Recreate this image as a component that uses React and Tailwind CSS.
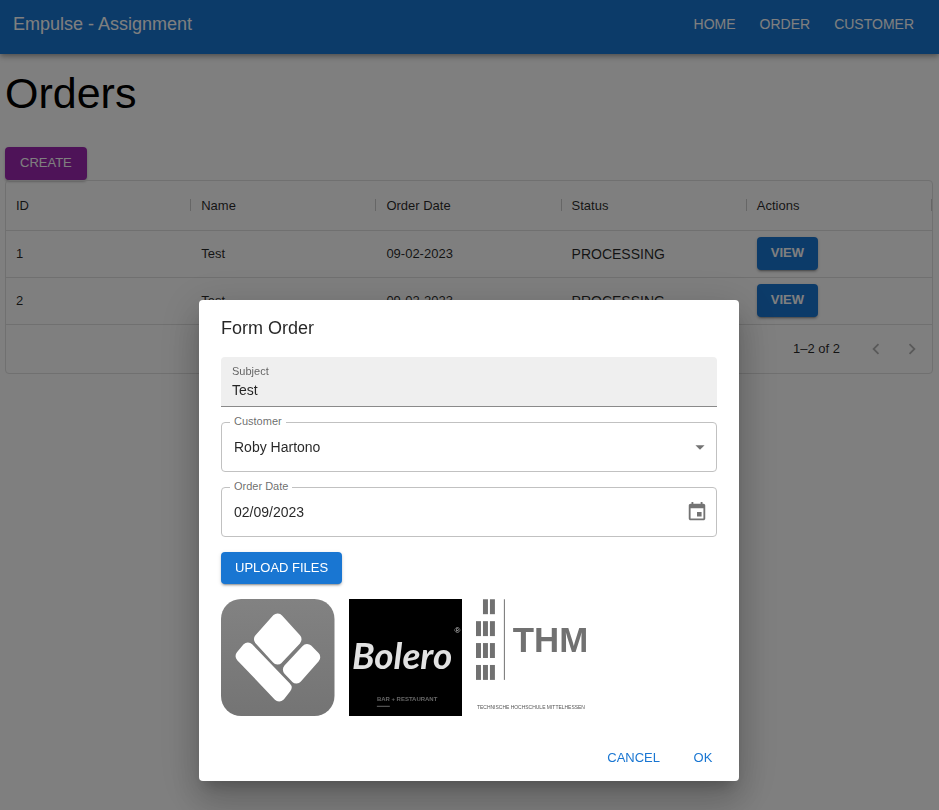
const orders = [
  { id: 1, name: "Test", date: "09-02-2023", status: "PROCESSING" },
  { id: 2, name: "Test", date: "09-02-2023", status: "PROCESSING" },
];

const columns = ["ID", "Name", "Order Date", "Status", "Actions"];

const raised =
  "rounded-[4px] text-[13px] leading-5 text-white shadow-[0_3px_1px_-2px_rgba(0,0,0,0.2),0_2px_2px_0_rgba(0,0,0,0.14),0_1px_4px_0_rgba(0,0,0,0.12)]";

function Icon({ d, className }) {
  return (
    <svg viewBox="0 0 24 24" className={className} fill="currentColor" aria-hidden="true">
      <path d={d} />
    </svg>
  );
}

function AppBar() {
  return (
    <header className="flex h-[54px] items-center justify-between bg-[#1976d2] pr-[25px] pb-[6px] pl-[13px] text-white shadow-[0_2px_4px_-1px_rgba(0,0,0,0.2),0_4px_5px_0_rgba(0,0,0,0.14),0_1px_9px_0_rgba(0,0,0,0.12)]">
      <div className="text-[18px] leading-6">Empulse - Assignment</div>
      <nav className="flex gap-6 text-sm">
        <a href="#home">HOME</a>
        <a href="#order">ORDER</a>
        <a href="#customer">CUSTOMER</a>
      </nav>
    </header>
  );
}

function OrdersTable() {
  return (
    <div className="overflow-hidden rounded-[4px] border border-[#e0e0e0] text-[13px] text-black/85">
      <table className="w-full table-fixed border-collapse">
        <thead>
          <tr className="h-[49px] border-b border-[#e0e0e0]">
            {columns.map((c) => (
              <th key={c} className="p-0 pl-[10px] text-left font-normal">
                <div className="flex items-center justify-between">
                  {c}
                  <span className="h-3 w-px bg-[#cccccc]" />
                </div>
              </th>
            ))}
          </tr>
        </thead>
        <tbody>
          {orders.map((o) => (
            <tr key={o.id} className="h-[47px] border-b border-[#e0e0e0]">
              <td className="p-0 pl-[10px]">{o.id}</td>
              <td className="p-0 pl-[10px]">{o.name}</td>
              <td className="p-0 pl-[10px]">{o.date}</td>
              <td className="p-0 pl-[10px] text-sm">{o.status}</td>
              <td className="p-0 pl-[10px]">
                <button type="button" className={`${raised} block h-[33px] bg-[#1976d2] px-[14px] pb-px font-bold`}>
                  VIEW
                </button>
              </td>
            </tr>
          ))}
        </tbody>
      </table>
      <div className="flex h-[48px] items-center justify-end pr-[9px]">
        <span className="mr-[25px]">1–2 of 2</span>
        <div className="flex gap-[14px] text-black/30">
          <button type="button" disabled aria-label="Previous page">
            <Icon className="size-[22px]" d="M15.41 16.59 10.83 12l4.58-4.59L14 6l-6 6 6 6z" />
          </button>
          <button type="button" disabled aria-label="Next page">
            <Icon className="size-[22px]" d="M8.59 16.59 13.17 12 8.59 7.41 10 6l6 6-6 6z" />
          </button>
        </div>
      </div>
    </div>
  );
}

function OutlinedField({ id, label, children }) {
  return (
    <div className="relative flex h-[50px] items-center rounded-[4px] border border-[#c1c1c1]">
      <label htmlFor={id} className="absolute -top-2 left-2 bg-white px-1 text-[11px] leading-3 text-black/60">
        {label}
      </label>
      {children}
    </div>
  );
}

function TilesLogo() {
  return (
    <svg viewBox="0 0 113 117" preserveAspectRatio="none" className="h-[117px] w-full" role="img" aria-label="Uploaded logo">
      <defs>
        <linearGradient id="tile" x1="0" y1="0" x2="0" y2="1">
          <stop offset="0" stopColor="#828282" />
          <stop offset="1" stopColor="#747474" />
        </linearGradient>
      </defs>
      <rect width="113" height="117" rx="20" fill="url(#tile)" />
      <g fill="#fff" stroke="#fff" strokeWidth="12" strokeLinejoin="round">
        <path d="M56.3 20.5 38.8 40.3 56.3 59.5 74.2 40.3z" />
        <path d="M26.7 49.5 20.5 57 58 96.5 64.2 88.6z" />
        <path d="M85.7 51 92.8 58.3 75 78.5 67.6 70.6z" />
      </g>
    </svg>
  );
}

function BoleroLogo() {
  return (
    <svg viewBox="0 0 114 117" className="h-[117px] w-full bg-black" role="img" aria-label="Bolero">
      <text x="3" y="70" fontSize="37" fontStyle="italic" fontWeight="700" fill="#e2e2e2" className="font-['Lato',sans-serif]">
        Bolero
      </text>
      <text x="106" y="34" fontSize="8" fill="#d0d0d0">®</text>
      <text x="28" y="102" fontSize="6" fontWeight="700" fill="#686868">
        BAR + RESTAURANT
      </text>
      <rect x="28" y="107" width="13" height="1" fill="#686868" />
    </svg>
  );
}

function ThmLogo() {
  return (
    <svg viewBox="0 0 114 117" className="h-[117px] w-full" role="img" aria-label="THM">
      <g fill="#717171">
        {[0, 22, 44, 66].map((y) =>
          [0, 7, 14].map((x) =>
            y === 0 && x === 0 ? null : <rect key={`${x}-${y}`} x={x} y={y} width="5" height="15" />
          )
        )}
        <rect x="28" width="1" height="81" />
        <text x="37" y="53" fontSize="35" fontWeight="700">
          THM
        </text>
      </g>
      <text x="1" y="110" fontSize="5" fill="#555">
        TECHNISCHE HOCHSCHULE MITTELHESSEN
      </text>
    </svg>
  );
}

function OrderDialog() {
  return (
    <div className="fixed inset-0 flex items-start justify-center overflow-hidden bg-black/50 pt-[300px] pr-px">
      <form
        role="dialog"
        aria-labelledby="dialog-title"
        className="w-full max-w-[540px] rounded-[4px] bg-white text-black/85 shadow-[0_10px_14px_-6px_rgba(0,0,0,0.2),0_22px_34px_3px_rgba(0,0,0,0.14),0_8px_41px_7px_rgba(0,0,0,0.12)]"
      >
        <h2 id="dialog-title" className="px-[22px] pt-[14px] pb-[15px] text-[18px] leading-7">
          Form Order
        </h2>
        <div className="flex flex-col gap-[15px] px-[22px] pb-[18px]">
          <div className="flex h-[50px] flex-col rounded-t-[4px] border-b border-[#8a8a8a] bg-[#efefef] px-[11px] pt-2">
            <label htmlFor="subject" className="text-[11px] leading-3 text-black/60">
              Subject
            </label>
            <input id="subject" defaultValue="Test" className="mt-[3px] h-5 w-full bg-transparent text-sm outline-none" />
          </div>
          <OutlinedField id="customer" label="Customer">
            <select id="customer" className="h-full w-full appearance-none bg-transparent px-3 text-sm outline-none">
              <option>Roby Hartono</option>
            </select>
            <Icon className="pointer-events-none absolute right-[5px] size-[22px] text-black/55" d="m7 10 5 5 5-5z" />
          </OutlinedField>
          <OutlinedField id="date" label="Order Date">
            <input id="date" defaultValue="02/09/2023" className="h-full min-w-0 flex-1 bg-transparent px-3 text-sm outline-none" />
            <button type="button" aria-label="Choose date" className="mr-2 text-black/55">
              <Icon
                className="size-[22px]"
                d="M17 12h-5v5h5v-5zM16 1v2H8V1H6v2H5c-1.11 0-1.99.9-1.99 2L3 19c0 1.1.89 2 2 2h14c1.1 0 2-.9 2-2V5c0-1.1-.9-2-2-2h-1V1h-2zm3 18H5V8h14v11z"
              />
            </button>
          </OutlinedField>
          <button type="button" className={`${raised} h-8 self-start bg-[#1976d2] px-[14px] font-medium`}>
            UPLOAD FILES
          </button>
          <div className="grid grid-cols-4 gap-[14px]">
            <TilesLogo />
            <BoleroLogo />
            <ThmLogo />
          </div>
        </div>
        <div className="flex justify-end gap-[7px] p-[7px] text-[13px] text-[#1976d2]">
          <button type="button" className="h-[33px] px-[7px]">
            CANCEL
          </button>
          <button type="button" className="h-[33px] min-w-[58px] px-[7px]">
            OK
          </button>
        </div>
      </form>
    </div>
  );
}

export default function App() {
  return (
    <div className="min-h-screen bg-white font-['Liberation_Sans',Arial,sans-serif] text-black">
      <AppBar />
      <main className="pt-[14px] pr-[6px] pl-[5px]">
        <h1 className="mb-[29px] text-[43px] leading-[50px]">Orders</h1>
        <button type="button" className={`${raised} block h-[33px] bg-[#9c27b0] px-[15px] pb-px`}>
          CREATE
        </button>
        <OrdersTable />
      </main>
      <OrderDialog />
    </div>
  );
}
